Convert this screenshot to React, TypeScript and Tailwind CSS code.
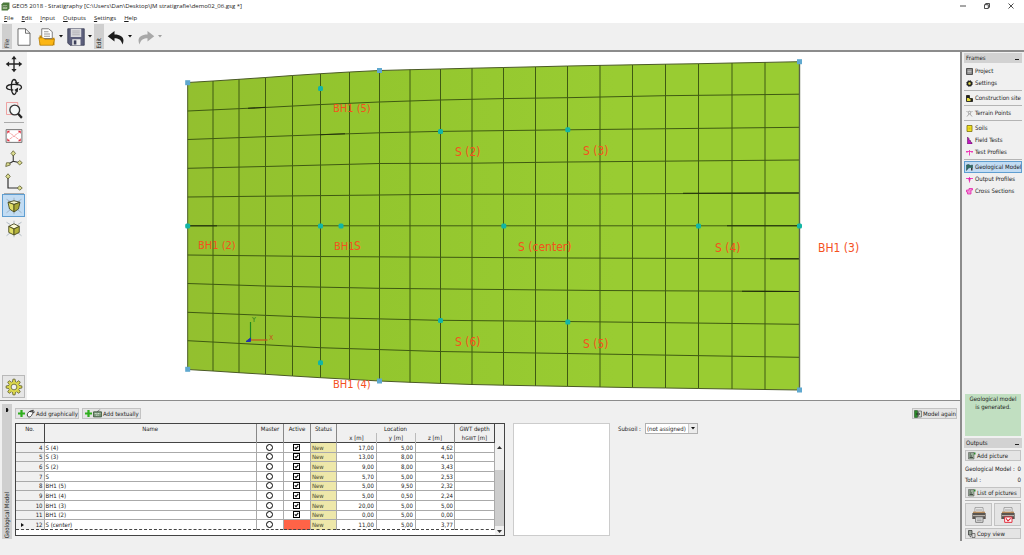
import type { ReactNode } from 'react';
import clsx from 'clsx';

interface Borehole {
  no: number;
  name: string;
  active: boolean;
  x: string;
  y: string;
  z: string;
}

const boreholes: Borehole[] = [
  { no: 4, name: 'S (4)', active: true, x: '17,00', y: '5,00', z: '4,62' },
  { no: 5, name: 'S (3)', active: true, x: '13,00', y: '8,00', z: '4,10' },
  { no: 6, name: 'S (2)', active: true, x: '9,00', y: '8,00', z: '3,43' },
  { no: 7, name: 'S', active: true, x: '5,70', y: '5,00', z: '2,53' },
  { no: 8, name: 'BH1 (5)', active: true, x: '5,00', y: '9,50', z: '2,32' },
  { no: 9, name: 'BH1 (4)', active: true, x: '5,00', y: '0,50', z: '2,24' },
  { no: 10, name: 'BH1 (3)', active: true, x: '20,00', y: '5,00', z: '5,00' },
  { no: 11, name: 'BH1 (2)', active: true, x: '0,00', y: '5,00', z: '0,00' },
  { no: 12, name: 'S (center)', active: false, x: '11,00', y: '5,00', z: '3,77' },
];

const SELECTED_NO = 12;

// Terrain mesh, top and bottom edge per column: [x, top, bottom]
const columns: [number, number, number][] = [
  [187.7, 82.5, 369.5],
  [213, 81, 371],
  [239, 79.3, 372.7],
  [265.5, 77.5, 374.3],
  [292.5, 75.5, 376],
  [320.5, 73.7, 377.7],
  [349.5, 72, 379.3],
  [379.5, 70.5, 381],
  [410, 69.7, 382.3],
  [440.5, 69, 383.4],
  [472, 68.2, 384.5],
  [503.5, 67.5, 385.2],
  [535.5, 66.8, 385.8],
  [567.5, 66, 386.4],
  [600, 65.4, 387],
  [632.5, 64.8, 387.6],
  [665.5, 64.2, 388],
  [698.5, 63.7, 388.5],
  [732, 63, 389],
  [765, 62.4, 389.5],
  [799.5, 61.7, 390],
];

const rowLines = [
  '187.7,111 265,107.5 320,104.6 379,102 440,100 503,98.6 567,97.7 665,95.7 799.5,94.2',
  '187.7,139.5 320,134.7 379,132.8 440,131.4 567,129.8 799.5,127.3',
  '187.7,168.3 265,166.5 379,163.5 472,163.2 567,162 799.5,160',
  '187.7,197 379,195 440,194.3 600,194 799.5,193',
  '187.7,225.8 799.5,225.8',
  '187.7,255 320,256.5 567,258 799.5,258.8',
  '187.7,283.5 265,286 379,288.3 600,290.5 799.5,291.5',
  '187.7,312.3 320,317.5 440,320.3 567,321.5 799.5,324.3',
  '187.7,340.7 320,347.7 440,351.5 567,353.5 799.5,357.3',
];

const darkSegments = [
  '248,108.3 266,107.3',
  '320,134.7 345,133.8',
  '188,225.8 217,225.8',
  '683,193.2 799,193',
  '727,225.8 799,225.8',
  '770,258.8 799,258.8',
  '742,291.3 799,291.5',
];

const corners = [
  [187.7, 82.7],
  [379.5, 70.5],
  [799.5, 61.7],
  [187.7, 369.3],
  [379.5, 381],
  [799.5, 390],
];

const points = [
  [320.5, 88.5],
  [440.5, 131.5],
  [567.8, 129.8],
  [187.7, 226],
  [320.5, 226],
  [341, 226],
  [503.8, 226],
  [698.5, 226],
  [799.5, 226],
  [440.5, 320.5],
  [567.8, 322],
  [320.5, 362.8],
];

const labels = [
  { text: 'BH1 (5)', x: 333, y: 112, size: 11 },
  { text: 'S (2)', x: 455, y: 156, size: 12 },
  { text: 'S (3)', x: 583, y: 155, size: 12 },
  { text: 'BH1 (2)', x: 198, y: 249, size: 11 },
  { text: 'BH1', x: 334, y: 250, size: 11 },
  { text: 'S', x: 354, y: 250, size: 12 },
  { text: 'S (center)', x: 518, y: 251, size: 12 },
  { text: 'S (4)', x: 715, y: 252, size: 12 },
  { text: 'BH1 (3)', x: 818, y: 252, size: 12 },
  { text: 'S (6)', x: 455, y: 346, size: 12 },
  { text: 'S (5)', x: 583, y: 348, size: 12 },
  { text: 'BH1 (4)', x: 333, y: 388, size: 11 },
];

function Icon({ className, box = 24, children }: { className?: string; box?: number; children: ReactNode }) {
  return (
    <svg viewBox={`0 0 ${box} ${box}`} className={clsx('shrink-0', className)} fill="none" aria-hidden="true">
      {children}
    </svg>
  );
}

function Caret({ faded }: { faded?: boolean }) {
  return (
    <svg viewBox="0 0 4 3" className="h-[3px] w-1" aria-hidden="true">
      <path d="M0 0h4L2 2.6z" fill={faded ? '#a0a0a0' : '#111'} />
    </svg>
  );
}

function Plus() {
  return (
    <Icon box={10} className="size-[7px]">
      <path d="M3.4 0h3.2v3.4H10v3.2H6.6V10H3.4V6.6H0V3.4h3.4z" fill="#2fae1d" />
    </Icon>
  );
}

function CubeIcon({ perspective }: { perspective?: boolean }) {
  return (
    <Icon className="size-[18px]">
      <path d="M2 3l5 3M22 3l-5 3M2 21l5-4M22 21l-5-4M12 1v4M12 19v4" stroke="#8a9aa8" strokeWidth="0.8" />
      {perspective ? (
        <g stroke="#4a4a20" strokeWidth="1.2">
          <path d="M4 7l8-2 8 2-8 3z" fill="#f6f5c8" />
          <path d="M4 7l8 3v10l-6-4z" fill="#e0de66" />
          <path d="M20 7l-8 3v10l6-4z" fill="#a9a838" />
        </g>
      ) : (
        <g stroke="#4a4a20" strokeWidth="1.2">
          <path d="M5 8.5l7-3.500 7 3.500-7 3.500z" fill="#fbfad8" />
          <path d="M5 8.5l7 3.500v8l-7-3.500z" fill="#e0de66" />
          <path d="M19 8.5l-7 3.500v8l7-3.500z" fill="#b5b33c" />
        </g>
      )}
    </Icon>
  );
}

function MoveIcon() {
  return (
    <Icon className="size-[18px]">
      <path d="M12 3v18M3 12h18" stroke="#222" strokeWidth="1.8" />
      <path d="M12 1l3.500 4.500h-7zM12 23l3.500-4.500h-7zM1 12l4.500-3.500v7zM23 12l-4.500-3.500v7z" fill="#222" />
    </Icon>
  );
}

function RotateIcon() {
  return (
    <Icon className="size-[18px]">
      <path d="M12 22c-2.500-1-3.500-5.500-3.500-10S9.500 2.500 12 2c2 0 3 2.500 3.500 5" stroke="#222" strokeWidth="1.8" />
      <path d="M12 22c2 0 3-3 3.300-6" stroke="#222" strokeWidth="1.8" />
      <path d="M19 15.500c2-.8 3-2 3-3.300C22 9.500 17 8.500 12 8.500S2 9.500 2 12.300c0 2 4 3.500 9 3.700" stroke="#222" strokeWidth="1.8" />
      <path d="M13 5.500h6l-3 4.500zM17.500 12.500l-.5 6.500-4.500-3z" fill="#222" />
    </Icon>
  );
}

function ZoomIcon() {
  return (
    <Icon className="size-[18px]">
      <path d="M2 2h15v16H2z" stroke="#ee8a8a" strokeWidth="1" />
      <circle cx="13" cy="12" r="6.500" fill="#f4f8f8" stroke="#333" strokeWidth="1.8" />
      <path d="M17.500 17l5 5.500" stroke="#222" strokeWidth="3" />
    </Icon>
  );
}

function FitIcon() {
  return (
    <Icon className="size-[18px]">
      <path d="M1.500 3.500h21v17h-21z" fill="#fff" stroke="#666" strokeWidth="1.2" />
      <path d="M5 7l14 10M19 7L5 17" stroke="#f08080" strokeWidth="1" strokeDasharray="3 1" />
      <path d="M3 5h4L3 9zM21 5h-4l4 4zM3 19h4l-4-4zM21 19h-4l4-4z" fill="#e03040" />
    </Icon>
  );
}

function AxesIcon() {
  return (
    <Icon className="size-[18px]">
      <path d="M11 5v10l9 2M11 15l-7 4" stroke="#333" strokeWidth="1.4" />
      <path d="M11 1l3 3.500L11 8 8 4.500zM23 17l-3.500 3-3-3 3-3zM1 22l1-5 4 0 1 3z" fill="#dcdc90" stroke="#55552a" strokeWidth="1" />
    </Icon>
  );
}

function PlanAxesIcon() {
  return (
    <Icon className="size-[18px]">
      <path d="M4 6v14h14" stroke="#333" strokeWidth="1.6" />
      <path d="M4 1l3 3.500L4 8 1 4.500zM23 20l-3.500 3-3-3 3-3z" fill="#dcdc90" stroke="#55552a" strokeWidth="1" />
    </Icon>
  );
}

function GearIcon() {
  const teeth = [0, 45, 90, 135, 180, 225, 270, 315];
  return (
    <Icon className="size-[18px]">
      {teeth.map(a => (
        <path key={a} d="M9.800 6l.8-4.500h2.800l.8 4.500z" fill="#dcd84e" stroke="#5a5a28" strokeWidth="1" transform={`rotate(${a} 12 12)`} />
      ))}
      <circle cx="12" cy="12" r="7" fill="#dcd84e" />
      <circle cx="12" cy="12" r="3.800" fill="#f0f0f0" stroke="#5a5a28" strokeWidth="1" />
    </Icon>
  );
}

function PrinterIcon({ red }: { red?: boolean }) {
  return (
    <Icon className="size-4">
      <path d="M6 1h12v7H6z" fill="#fff" stroke="#777" />
      <path d="M7.500 3.500h9M7.500 5.500h9" stroke="#999" />
      <path d="M3 7h18v3H3z" fill="#b58a5a" />
      <path d="M2 9h20v9H2z" fill="#5a5550" />
      <path d="M3 13h18" stroke="#c9c4bc" strokeWidth="1.5" />
      <path d="M7 15h11v8H7z" fill={red ? '#fff' : '#e6e6e6'} stroke={red ? '#e02030' : '#777'} strokeWidth="1.4" />
      {red ? <path d="M9 17l3 4 4-4" stroke="#e02030" strokeWidth="1.6" /> : <path d="M9 18h7M9 20.500h7" stroke="#777" />}
    </Icon>
  );
}

function PictureIcon() {
  return (
    <Icon box={16} className="size-2">
      <path d="M1 1h11v13H1z" fill="#9db29d" stroke="#444" />
      <path d="M3 4h3M3 8h5M3 11h7" stroke="#222" strokeWidth="1.4" />
      <path d="M12 1h3v4h-3z" fill="#2a8a2a" />
    </Icon>
  );
}

function ViewTool({ label, active, children }: { label: string; active?: boolean; children: ReactNode }) {
  return (
    <button
      type="button"
      aria-label={label}
      className={clsx(
        'flex size-[23px] shrink-0 items-center justify-center border',
        active ? 'border-[#5f9ed1] bg-[#c2dcf3]' : 'border-transparent'
      )}
    >
      {children}
    </button>
  );
}

function PanelButton({ className, children }: { className?: string; children: ReactNode }) {
  return (
    <button type="button" className={clsx('flex h-[11px] items-center gap-px border border-[#c3c3c3] bg-[#e4e4e4] whitespace-nowrap', className)}>
      {children}
    </button>
  );
}

function FrameItem({ label, active, children }: { label: string; active?: boolean; children: ReactNode }) {
  return (
    <button
      type="button"
      className={clsx(
        'flex h-3 w-full items-center gap-0.5 border pl-px text-left whitespace-nowrap',
        active ? 'border-[#5f9ed1] bg-[#c2dcf3]' : 'border-transparent'
      )}
    >
      <Icon box={14} className="size-[7px]">
        {children}
      </Icon>
      {label}
    </button>
  );
}

function Divider() {
  return <div className="my-px h-px bg-[#b4b4b4]" />;
}

function PanelHeader({ title }: { title: string }) {
  return (
    <div className="flex h-[10px] items-center justify-between bg-[#d2d2d2] px-0.5">
      <h2>{title}</h2>
      <button type="button" aria-label={`Collapse ${title}`} className="flex h-2 w-1.5 items-end justify-center pb-0.5">
        <span className="h-px w-1 bg-[#222]" />
      </button>
    </div>
  );
}

function TitleBar() {
  return (
    <header className="flex h-3 items-center bg-white font-['Open_Sans','Noto_Sans',sans-serif] text-[6px] leading-[8px]">
      <Icon box={16} className="ml-px size-[9px]">
        <path d="M1 4l3-3h11v10l-3 4H1z" fill="#4c7a3c" />
        <path d="M3 6h8v6H3z" fill="#b8cfa8" />
        <path d="M3 9c3-2 5 1 8-1" stroke="#2c4a22" strokeWidth="1.5" />
      </Icon>
      <h1 className="ml-0.5 flex-1">GEO5 2018 - Stratigraphy [C:\Users\Dan\Desktop\JM stratigrafie\demo02_06.gsg *]</h1>
      <div className="flex w-[74px] items-center justify-between px-[10px]">
        <button type="button" aria-label="Minimize">
          <Icon box={6} className="size-1.5">
            <path d="M0 3h6" stroke="#222" strokeWidth="0.8" />
          </Icon>
        </button>
        <button type="button" aria-label="Restore">
          <Icon box={6} className="size-1.5">
            <path d="M.5 1.700h3.800v3.800H.5zM1.700 1.700V.5h3.800v3.800H4.300" stroke="#222" strokeWidth="0.8" />
          </Icon>
        </button>
        <button type="button" aria-label="Close">
          <Icon box={6} className="size-1.5">
            <path d="M.5.5l5 5M5.500.5l-5 5" stroke="#222" strokeWidth="0.8" />
          </Icon>
        </button>
      </div>
    </header>
  );
}

function MenuBar() {
  const items = ['File', 'Edit', 'Input', 'Outputs', 'Settings', 'Help'];
  return (
    <nav className="flex h-[11px] items-center gap-2 bg-white pl-1 font-['Open_Sans','Noto_Sans',sans-serif] text-[6px] leading-[8px]">
      {items.map(item => (
        <button key={item} type="button">
          <span className="underline">{item[0]}</span>
          {item.slice(1)}
        </button>
      ))}
    </nav>
  );
}

function ToolbarTab({ label }: { label: string }) {
  return (
    <div className="flex h-[25px] w-[10px] items-end justify-center bg-[#cfcfcf] pb-px">
      <span className="rotate-180 leading-[10px] [writing-mode:vertical-rl]">{label}</span>
    </div>
  );
}

function Toolbar() {
  return (
    <div className="flex h-[29px] items-center border-b-2 border-[#8c8c8c] bg-[#f0f0f0] pl-0.5">
      <ToolbarTab label="File" />
      <button type="button" aria-label="New" className="ml-[3px]">
        <Icon className="size-[18px]">
          <path d="M4 1h10l6 6v16H4z" fill="#fff" stroke="#444" strokeWidth="1" />
          <path d="M14 1v6h6" stroke="#444" strokeWidth="1" />
        </Icon>
      </button>
      <button type="button" aria-label="Open" className="ml-[5px] flex items-center gap-[3px]">
        <Icon className="size-[18px]">
          <path d="M5 14V1h9l5 4v9z" fill="#fff" stroke="#555" />
          <path d="M8 5h6M8 8h8M8 11h8" stroke="#777" />
          <path d="M2 10h3v5h14v-2h3v10H2z" fill="#c98a05" />
          <path d="M1 13h6l2 2h13l-2 8H3z" fill="#fbb615" stroke="#9b6a00" strokeWidth="0.7" />
        </Icon>
        <Caret />
      </button>
      <button type="button" aria-label="Save" className="ml-1 flex items-center gap-[3px]">
        <Icon className="size-[18px]">
          <path d="M1 1h22v22H4l-3-3z" fill="#5c5f7c" stroke="#33354d" strokeWidth="1" />
          <path d="M5 1h14v11H5z" fill="#d8d8dc" />
          <path d="M7 4h10M7 6.500h10M7 9h10" stroke="#a5a5ac" />
          <path d="M7 15h11v8H7z" fill="#eee" />
          <path d="M9 16.500h3.500V22H9z" fill="#3d405a" />
        </Icon>
        <Caret />
      </button>
      <div className="ml-0.5">
        <ToolbarTab label="Edit" />
      </div>
      <button type="button" aria-label="Undo" className="ml-[3px] flex items-center gap-[3px]">
        <Icon className="size-[18px]">
          <path d="M10 4L1 11l9 7v-4.500c5 0 9 1.500 10.500 8.500C24.500 14 20 8.500 10 8.500z" fill="#1c1c1c" />
        </Icon>
        <Caret />
      </button>
      <button type="button" aria-label="Redo" disabled className="ml-[5px] flex items-center gap-[3px]">
        <Icon className="size-[18px]">
          <path d="M14 4l9 7-9 7v-4.500c-5 0-9 1.500-10.500 8.500C-.5 14 4 8.500 14 8.500z" fill="#a8a8a8" />
        </Icon>
        <Caret faded />
      </button>
    </div>
  );
}

function ViewTools() {
  return (
    <aside className="flex w-[27px] shrink-0 flex-col items-center bg-[#f0f0f0] pb-0.5">
      <ViewTool label="Pan"><MoveIcon /></ViewTool>
      <ViewTool label="Rotate"><RotateIcon /></ViewTool>
      <ViewTool label="Zoom window"><ZoomIcon /></ViewTool>
      <div className="my-px h-px w-5 bg-[#aaa]" />
      <ViewTool label="Zoom all"><FitIcon /></ViewTool>
      <ViewTool label="Axonometric view"><AxesIcon /></ViewTool>
      <ViewTool label="Plan view"><PlanAxesIcon /></ViewTool>
      <div className="h-px w-5 bg-[#aaa]" />
      <ViewTool label="Perspective" active><CubeIcon perspective /></ViewTool>
      <ViewTool label="Parallel projection"><CubeIcon /></ViewTool>
      <button
        type="button"
        aria-label="Drawing settings"
        className="mt-auto flex size-[23px] items-center justify-center border border-[#b9b9b9] bg-[#e6e6e6]"
      >
        <GearIcon />
      </button>
    </aside>
  );
}

function TerrainView() {
  const outline = [
    ...columns.map(([x, top]) => `${x},${top}`),
    ...[...columns].reverse().map(([x, , bottom]) => `${x},${bottom}`),
  ].join(' ');

  return (
    <main className="min-w-0 flex-1 bg-white">
      <svg viewBox="27 52 933 348" className="block h-auto w-full" fill="none" role="img" aria-label="Terrain model">
        <defs>
          <linearGradient id="terrain" x1="0" x2="1" y1="0" y2="0">
            <stop offset="0" stopColor="#93c02f" />
            <stop offset="0.3" stopColor="#93c62e" />
            <stop offset="0.7" stopColor="#99cc32" />
          </linearGradient>
        </defs>
        <polygon points={outline} fill="url(#terrain)" stroke="#4b5a26" strokeWidth="1" />
        <g stroke="#3f5a12" strokeWidth="1">
          {columns.slice(1, -1).map(([x, top, bottom]) => (
            <line key={x} x1={x} y1={top} x2={x} y2={bottom} />
          ))}
          {rowLines.map(line => (
            <polyline key={line} points={line} />
          ))}
        </g>
        {darkSegments.map(seg => (
          <polyline key={seg} points={seg} stroke="#22300c" strokeWidth="1.1" />
        ))}
        <path d="M799.500 62v328" stroke="#5a6448" strokeWidth="1.4" />

        {corners.map(([x, y]) => (
          <rect key={`${x}-${y}`} x={x - 2.5} y={y - 2.5} width="5" height="5" fill="#5fa8cf" />
        ))}
        {points.map(([x, y]) => (
          <rect key={`${x}-${y}`} x={x - 2.5} y={y - 2.5} width="5" height="5" rx="1.5" fill="#12b5a5" />
        ))}

        {/* Axis cross */}
        <path d="M250.500 340v-18" stroke="#1f8a1f" strokeWidth="1.2" />
        <path d="M250.500 340h17" stroke="#c8501e" strokeWidth="1.2" />
        <path d="M246 341.500l4.500-3.500v3.500z" fill="#2430b0" stroke="#2430b0" />

        <g className="font-['DejaVu_Sans_Condensed','DejaVu_Sans',sans-serif]">
          <text x="252" y="322" fontSize="7" fill="#1f7a1f">Y</text>
          <text x="269" y="340" fontSize="7" fill="#c8501e">X</text>
          {labels.map(l => (
            <text key={`${l.text}-${l.x}`} x={l.x} y={l.y} fontSize={l.size} fill="#f4511e">
              {l.text}
            </text>
          ))}
        </g>
      </svg>
    </main>
  );
}

function TableColumns() {
  return (
    <colgroup>
      <col className="w-[28px]" />
      <col />
      <col className="w-[27px]" />
      <col className="w-[27px]" />
      <col className="w-[26px]" />
      <col className="w-[40px]" />
      <col className="w-[39px]" />
      <col className="w-[39px]" />
      <col className="w-[40px]" />
    </colgroup>
  );
}

function BoreholeTable() {
  const th = 'border-r p-0 pt-px align-top font-normal';
  return (
    <div className="flex h-[113px] w-[490px] shrink-0 border border-[#444] bg-white">
      <div className="min-w-0 flex-1">
        <table className="h-[106px] w-full table-fixed border-collapse leading-[7px]">
          <TableColumns />
          <thead className="border-b border-[#444] bg-[#f0f0f0]">
            <tr className="h-[9px]">
              <th rowSpan={2} className={clsx(th, 'border-[#444]')}>No.</th>
              <th rowSpan={2} className={clsx(th, 'border-[#888]')}>Name</th>
              <th rowSpan={2} className={clsx(th, 'border-[#888]')}>Master</th>
              <th rowSpan={2} className={clsx(th, 'border-[#888]')}>Active</th>
              <th rowSpan={2} className={clsx(th, 'border-[#888]')}>Status</th>
              <th colSpan={3} className={clsx(th, 'border-[#888]')}>Location</th>
              <th className={clsx(th, 'border-[#444]')}>GWT depth</th>
            </tr>
            <tr className="h-[9px]">
              <th className={clsx(th, 'border-[#bbb]')}>x [m]</th>
              <th className={clsx(th, 'border-[#bbb]')}>y [m]</th>
              <th className={clsx(th, 'border-[#888]')}>z [m]</th>
              <th className={clsx(th, 'border-[#444]')}>
                h<span className="text-[5px]">GWT</span> [m]
              </th>
            </tr>
          </thead>
          <tbody>
            {boreholes.map(b => {
              const selected = b.no === SELECTED_NO;
              const td = clsx('border-r border-b border-r-[#aaa] p-0', selected ? 'border-b-[#444] [border-bottom-style:dashed]' : 'border-b-[#aaa]');
              return (
                <tr key={b.no}>
                  <td className={clsx(td, 'border-r-[#444] bg-[#f0f0f0]')}>
                    <div className="flex items-center justify-end pr-px">
                      {selected && (
                        <svg viewBox="0 0 3 4" className="mr-auto ml-[5px] h-1 w-[3px]" aria-hidden="true">
                          <path d="M0 0l3 2-3 2z" fill="#111" />
                        </svg>
                      )}
                      {b.no}
                    </div>
                  </td>
                  <td className={clsx(td, 'pl-px')}>{b.name}</td>
                  <td className={td}>
                    <input
                      type="radio"
                      name="master"
                      aria-label={`Master ${b.name}`}
                      className="mx-auto block size-[7px] appearance-none rounded-full border border-black checked:bg-black"
                    />
                  </td>
                  <td className={clsx(td, !b.active && 'bg-[#ff6347]')}>
                    {b.active && (
                      <div className="relative mx-auto size-[7px]">
                        <input
                          type="checkbox"
                          defaultChecked
                          aria-label={`Active ${b.name}`}
                          className="peer block size-[7px] appearance-none border border-black bg-white"
                        />
                        <svg viewBox="0 0 7 7" className="pointer-events-none absolute inset-0 hidden size-[7px] peer-checked:block" fill="none" aria-hidden="true">
                          <path d="M1.800 3.300L3 4.700l2.300-2.900" stroke="#111" strokeWidth="1.1" />
                        </svg>
                      </div>
                    )}
                  </td>
                  <td className={clsx(td, 'bg-[#eee8aa] pl-px text-[#4a4830]')}>New</td>
                  <td className={clsx(td, 'pr-0.5 text-right')}>{b.x}</td>
                  <td className={clsx(td, 'pr-0.5 text-right')}>{b.y}</td>
                  <td className={clsx(td, 'pr-px text-right')}>{b.z}</td>
                  <td className={clsx(td, 'border-r-[#444]')} />
                </tr>
              );
            })}
          </tbody>
        </table>
      </div>
      <div className="flex w-[9px] flex-col items-center bg-[#f0f0f0] pt-[22px] pb-0.5">
        <svg viewBox="0 0 5 3" className="h-[3px] w-[5px]" aria-hidden="true">
          <path d="M0 3h5L2.500 0z" fill="#333" />
        </svg>
        <div className="mt-[21px] w-full flex-1 bg-[#cdcdcd]" />
        <svg viewBox="0 0 5 3" className="mt-1 h-[3px] w-[5px]" aria-hidden="true">
          <path d="M0 0h5L2.500 3z" fill="#333" />
        </svg>
      </div>
    </div>
  );
}

function ModelPanel() {
  return (
    <section className="flex border-t border-[#8c8c8c] bg-[#f0f0f0] pt-[3px] pb-0.5 pl-0.5">
      <div className="flex w-[10px] flex-col items-center justify-between bg-[#cfcfcf] pt-1 pb-px">
        <svg viewBox="0 0 3 4" className="h-1 w-[3px]" aria-hidden="true">
          <path d="M0 0h1.500l1 2-1 2H0z" fill="#111" />
        </svg>
        <span className="rotate-180 leading-[10px] [writing-mode:vertical-rl]">Geological Model</span>
      </div>
      <div className="min-w-0 flex-1 pt-1 pb-[3px] pl-[3px]">
        <div className="flex gap-[3px] pr-[3px]">
          <PanelButton className="w-16 pl-0.5">
            <Plus />
            <Icon box={16} className="size-[9px]">
              <path d="M3 13c-2-3 0-7 4-9l6-2-2 4 4-1-4 4c-1 4-5 7-8 4z" fill="#fff" stroke="#222" strokeWidth="1.5" />
              <path d="M6 4l5-1-2 3z" fill="#222" />
            </Icon>
            Add graphically
          </PanelButton>
          <PanelButton className="w-[59px] pl-0.5">
            <Plus />
            <Icon box={16} className="size-[9px]">
              <path d="M1 5h14v9H1z" fill="#7d9a7d" stroke="#2f4a2f" strokeWidth="1.4" />
              <path d="M3 8h10M5 11h6" stroke="#e8f0e8" strokeDasharray="2 1" strokeWidth="1.4" />
              <path d="M8 5c0-3 3-1 4-4" stroke="#333" />
            </Icon>
            Add textually
          </PanelButton>
          <PanelButton className="ml-auto w-[45px] pl-px">
            <Icon box={16} className="size-2">
              <path d="M1 1h6v14H1z" fill="#2a8a2a" stroke="#173d17" />
              <path d="M8 2h7v12H8z" fill="#cfd8cf" stroke="#333" />
              <path d="M4 8h7l-2-3M11 8l-2 3" stroke="#111" strokeWidth="1.4" />
            </Icon>
            Model again
          </PanelButton>
        </div>
        <div className="mt-1 flex items-start">
          <BoreholeTable />
          <div className="ml-2 h-[113px] w-[97px] shrink-0 border border-[#ccc] bg-white" />
          <label htmlFor="subsoil" className="ml-2 leading-[11px]">Subsoil :</label>
          <div className="relative ml-1">
            <select
              id="subsoil"
              className="block h-[11px] w-[53px] appearance-none border border-[#b0b0b0] bg-white pl-px leading-[9px]"
            >
              <option>(not assigned)</option>
            </select>
            <span className="pointer-events-none absolute inset-y-px right-px flex w-[9px] items-center justify-center border-l border-[#ccc] bg-[#ececec]">
              <Caret />
            </span>
          </div>
        </div>
      </div>
    </section>
  );
}

function FramesPanel() {
  return (
    <aside className="flex w-16 shrink-0 flex-col border-l-2 border-[#8c8c8c] bg-[#f0f0f0] px-0.5 pt-px pb-0.5">
      <PanelHeader title="Frames" />
      <nav className="pt-0.5">
        <FrameItem label="Project">
          <path d="M1 1h12v12H1z" fill="#777" stroke="#333" strokeWidth="1.5" />
          <path d="M3 4h8M3 7h8M3 10h8" stroke="#e8e8e8" strokeWidth="1.3" />
        </FrameItem>
        <FrameItem label="Settings">
          <circle cx="7" cy="7" r="4" fill="#e8e04a" stroke="#222" strokeWidth="3" />
          <circle cx="7" cy="7" r="6" stroke="#222" strokeWidth="1.6" strokeDasharray="2.500 2.200" />
        </FrameItem>
        <Divider />
        <FrameItem label="Construction site">
          <path d="M1 1h6v6h6v6H1z" fill="#e6dd3a" stroke="#222" strokeWidth="1.8" />
          <path d="M1 1h5v5H1zM9 8h4v5H9z" fill="#222" />
        </FrameItem>
        <Divider />
        <FrameItem label="Terrain Points">
          <circle cx="7" cy="5" r="2.500" stroke="#666" strokeWidth="1.2" />
          <path d="M2 13l4-5M12 13L8 8M1 2l2 2M13 2l-2 2" stroke="#777" strokeWidth="1.2" />
        </FrameItem>
        <Divider />
        <FrameItem label="Soils">
          <path d="M2 1h10v12H2z" fill="#f3e21c" stroke="#7b7010" strokeWidth="1.6" />
          <path d="M5 5h4v4H5z" fill="#d3c21a" />
        </FrameItem>
        <FrameItem label="Field Tests">
          <path d="M3 0v14h9v-3l-3-1V7L6 6V3z" fill="#c218c2" stroke="#4a0a4a" strokeWidth="1" />
        </FrameItem>
        <FrameItem label="Test Profiles">
          <path d="M0 5h14M7 2v11M2 4v4M12 4v4" stroke="#ee2fb4" strokeWidth="1.8" />
        </FrameItem>
        <Divider />
        <FrameItem label="Geological Model" active>
          <path d="M1 2l4-1 4 2 4-1v6L9 7 5 8l-4 5z" fill="#2f6f62" stroke="#1d3f47" strokeWidth="1" />
          <path d="M10 8h3v5h-3z" fill="#333" />
        </FrameItem>
        <FrameItem label="Output Profiles">
          <path d="M0 5h14M7 2v11" stroke="#ee2fb4" strokeWidth="1.8" />
          <path d="M5 4h4v5H5z" fill="#d928a8" />
        </FrameItem>
        <FrameItem label="Cross Sections">
          <path d="M1 4h5V1h7v3h-3v8H3V8H1z" fill="#f28ad6" stroke="#e020a8" strokeWidth="1.5" />
        </FrameItem>
      </nav>

      <div className="mt-auto mr-px ml-px h-[42px] bg-[#c1dfc1] pt-px text-center leading-[8px]">
        Geological model
        <br />
        is generated.
      </div>
      <div className="mt-0.5">
        <PanelHeader title="Outputs" />
        <div className="flex flex-col gap-0.5 px-px pt-0.5">
          <PanelButton className="pl-0.5">
            <PictureIcon />
            Add picture
          </PanelButton>
          <dl className="leading-[11px]">
            <div className="flex justify-between whitespace-nowrap">
              <dt>Geological Model :</dt>
              <dd>0</dd>
            </div>
            <div className="flex justify-between">
              <dt>Total :</dt>
              <dd>0</dd>
            </div>
          </dl>
          <PanelButton className="pl-0.5">
            <PictureIcon />
            List of pictures
          </PanelButton>
          <div className="h-px bg-[#b4b4b4]" />
          <div className="grid grid-cols-2 gap-0.5">
            <button type="button" aria-label="Print" className="flex h-[23px] items-center justify-center border border-[#c3c3c3] bg-[#e4e4e4]">
              <PrinterIcon />
            </button>
            <button type="button" aria-label="Print to PDF" className="flex h-[23px] items-center justify-center border border-[#c3c3c3] bg-[#e4e4e4]">
              <PrinterIcon red />
            </button>
          </div>
          <PanelButton className="pl-0.5">
            <Icon box={16} className="size-2">
              <path d="M1 1h7v9H1z" fill="#9aa39a" stroke="#222" strokeWidth="1.3" />
              <path d="M8 7h6v8H8z" fill="#ddd" stroke="#444" strokeWidth="1.3" />
              <path d="M3 12l3 2" stroke="#222" strokeWidth="1.5" />
            </Icon>
            Copy view
          </PanelButton>
        </div>
      </div>
    </aside>
  );
}

export default function App() {
  return (
    <div className="flex min-h-screen flex-col bg-[#f0f0f0] font-['DejaVu_Sans_Condensed','DejaVu_Sans',sans-serif] text-[6px] leading-[8px] text-[#1a1a1a]">
      <TitleBar />
      <MenuBar />
      <Toolbar />
      <div className="flex">
        <div className="min-w-0 flex-1">
          <div className="flex">
            <ViewTools />
            <TerrainView />
          </div>
          <ModelPanel />
        </div>
        <FramesPanel />
      </div>
    </div>
  );
}
